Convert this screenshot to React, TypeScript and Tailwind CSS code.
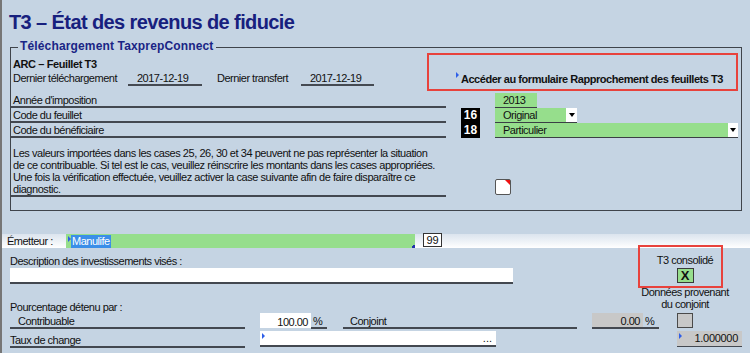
const BG = "bg-[#c5d4e3]";

function Marker() {
  return (
    <span className="absolute left-[2px] top-[2px] w-0 h-0 border-y-[3px] border-y-transparent border-l-[3px] border-l-[#2f5fe8]" />
  );
}

function Dropdown({ w }: { w: string }) {
  return (
    <div className={`${w} h-[15px] bg-white border-b border-[#3b3f45] flex items-center justify-center`}>
      <span className="w-0 h-0 border-x-[3px] border-x-transparent border-t-[4px] border-t-black" />
    </div>
  );
}

function Black({ n }: { n: string }) {
  return (
    <div className="w-[19px] h-[15px] bg-black text-white font-bold text-[12px] leading-[15px] text-center tracking-normal">
      {n}
    </div>
  );
}

export default function App() {
  return (
    <div
      className={`w-[750px] h-[353px] overflow-hidden ${BG} border-l-2 border-[#767676] text-[11px] tracking-[-0.5px] text-[#111] font-['Liberation_Sans',Arial,sans-serif]`}
    >
      <h1 className="pt-[8px] pl-[7px] text-[20px] leading-[28px] font-bold tracking-[-0.6px] text-[#17207e]">
        T3 – État des revenus de fiducie
      </h1>

      {/* Fieldset */}
      <div className="relative mt-[11px] ml-[8px] w-[732px] border border-[#3f444b] pb-[13px]">
        <div
          className={`absolute left-[7px] top-[-9px] px-[2px] ${BG} text-[12px] leading-[14px] font-bold tracking-[0.15px] text-[#1a2585]`}
        >
          Téléchargement TaxprepConnect
        </div>

        {/* top section */}
        <div className="flex justify-between h-[43px]">
          <div className="pt-[9px]">
            <div className="pl-[2px] font-bold leading-[14px] tracking-[-0.4px]">ARC – Feuillet T3</div>
            <div className="flex items-end">
              <div className="w-[117px] pl-[2px] leading-[15px]">Dernier téléchargement</div>
              <div className="w-[74px] h-[15px] pl-[9px] leading-[15px] border-b-2 border-[#454a52]">2017-12-19</div>
              <div className="w-[99px] pl-[15px] leading-[15px]">Dernier transfert</div>
              <div className="w-[73px] h-[15px] pl-[9px] leading-[15px] border-b-2 border-[#454a52]">2017-12-19</div>
            </div>
          </div>
          <div className="mt-[5px] mr-[3px] w-[311px] h-[38px] border-2 border-[#e8423c] flex items-end justify-end pr-[13px] pb-[4px]">
            <div className="relative font-bold leading-[12px] tracking-[-0.45px]">
              <span className="absolute left-[-5px] top-[-1px] w-0 h-0 border-y-[3px] border-y-transparent border-l-[3px] border-l-[#2f5fe8]" />
              Accéder au formulaire Rapprochement des feuillets T3
            </div>
          </div>
        </div>

        {/* rows */}
        <div className="mt-[2px] flex flex-col">
          <div className="flex h-[15px]">
            <div className="w-[435px] h-[15px] border-b-2 border-[#434850] pl-[2px] leading-[15px]">Année d'imposition</div>
            <div className="ml-[15px] w-[19px]" />
            <div className="ml-[15px] w-[42px] h-[15px] bg-[#96de8c] border-b border-[#3b3f45] pl-[8px] leading-[15px]">2013</div>
          </div>
          <div className="flex h-[15px]">
            <div className="w-[435px] h-[15px] border-b-2 border-[#434850] pl-[2px] leading-[15px]">Code du feuillet</div>
            <div className="ml-[15px]"><Black n="16" /></div>
            <div className="ml-[15px] w-[71px] h-[15px] bg-[#96de8c] border-b border-[#3b3f45] pl-[8px] leading-[15px]">Original</div>
            <Dropdown w="w-[11px]" />
          </div>
          <div className="flex h-[15px]">
            <div className="w-[435px] h-[15px] border-b-2 border-[#434850] pl-[2px] leading-[15px]">Code du bénéficiaire</div>
            <div className="ml-[15px]"><Black n="18" /></div>
            <div className="ml-[15px] w-[233px] h-[15px] bg-[#96de8c] border-b border-[#3b3f45] pl-[8px] leading-[15px]">Particulier</div>
            <Dropdown w="w-[10px]" />
          </div>
        </div>

        {/* paragraph */}
        <div className="mt-[9px] flex">
          <div className="w-[435px] border-b-2 border-[#434850] pl-[2px] leading-[12px] whitespace-nowrap tracking-[-0.45px]">
            Les valeurs importées dans les cases 25, 26, 30 et 34 peuvent ne pas représenter la situation
            <br />
            de ce contribuable. Si tel est le cas, veuillez réinscrire les montants dans les cases appropriées.
            <br />
            Une fois la vérification effectuée, veuillez activer la case suivante afin de faire disparaître ce
            <br />
            diagnostic.
          </div>
          <div className="ml-[49px] self-end mb-[2px] relative w-[16px] h-[16px] bg-white border border-[#555] rounded-[2px]">
            <span className="absolute right-0 top-0 w-0 h-0 border-t-[5px] border-t-[#e11] border-l-[5px] border-l-transparent" />
          </div>
        </div>
      </div>

      {/* Emetteur band */}
      <div className="mt-[23px] h-[14px] flex bg-gradient-to-b from-[#dbe4ee] to-white">
        <div className="w-[64px] pl-[5px] leading-[14px]">Émetteur :</div>
        <div className="relative w-[349px] h-[14px] bg-[#96de8c]">
          <Marker />
          <span className="absolute left-[5px] top-[1px] h-[13px] px-[1px] bg-[#3a8ee8] text-white leading-[13px]">Manulife</span>
          <span className="absolute right-0 bottom-0 w-[3px] h-[3px] border-r-2 border-b-2 border-[#2233aa]" />
        </div>
        <div className="ml-[8px] -mt-[1px] w-[19px] h-[14px] bg-white border border-[#333] text-center leading-[12px] tracking-normal">
          99
        </div>
      </div>

      {/* lower */}
      <div className="flex">
        <div className="w-[636px] pl-[8px]">
          <div className="mt-[7px] leading-[12px]">Description des investissements visés :</div>
          <div className="mt-[1px] w-[503px] h-[16px] bg-white border-b-2 border-[#434850]" />
          <div className="mt-[17px] leading-[12px]">Pourcentage détenu par :</div>
        </div>
        <div className="w-[103px] -mt-[3px] flex flex-col">
          <div className="w-[85px] h-[43px] border-2 border-[#e8423c] flex flex-col items-center pl-[9px] pt-[7px]">
            <div className="leading-[12px] whitespace-nowrap">T3 consolidé</div>
            <div className="mt-[2px] w-[17px] h-[15px] bg-[#96de8c] border border-[#3a3a3a] text-center font-bold text-[13px] leading-[13px] tracking-normal">
              X
            </div>
          </div>
          <div className="-mt-[2px] w-[94px] text-center leading-[12px] whitespace-nowrap">
            Données provenant
            <br />
            du conjoint
          </div>
        </div>
      </div>

      {/* Contribuable row */}
      <div className="flex pl-[8px] items-start">
        <div className="w-[235px] h-[16px] border-b-2 border-[#434850] pl-[8px] pt-[1px] leading-[15px]">Contribuable</div>
        <div className="ml-[15px] w-[51px] h-[15px] bg-white text-right pr-[3px] pt-[2px] leading-[14px]">100.00</div>
        <div className="w-[16px] h-[16px] border-b-2 border-[#434850] pl-[2px] pt-[1px] leading-[14px]">%</div>
        <div className="ml-[16px] w-[234px] h-[16px] border-b-2 border-[#434850] pl-[7px] pt-[1px] leading-[15px]">Conjoint</div>
        <div className="ml-[15px] flex h-[16px] border-b-2 border-[#434850]">
          <div className="w-[51px] h-[14px] bg-[#c8c8c8] text-right pr-[3px] pt-[1px] leading-[14px]">0.00</div>
          <div className="w-[16px] pl-[2px] pt-[1px] leading-[14px]">%</div>
        </div>
        <div className="ml-[18px] w-[16px] h-[15px] bg-[#c8c8c8] border border-[#4a4a4a]" />
      </div>

      {/* Taux row */}
      <div className="mt-[2px] flex pl-[8px] items-start">
        <div className="w-[235px] h-[17px] border-b-2 border-[#434850] pt-[2px] leading-[15px]">Taux de change</div>
        <div className="relative ml-[15px] w-[236px] h-[16px] bg-white border-b-2 border-[#434850]">
          <Marker />
          <span className="absolute right-[4px] top-0 leading-[14px] tracking-normal">...</span>
        </div>
        <div className="relative ml-[181px] w-[65px] h-[16px] bg-[#c8c8c8] border-b border-[#434850] text-right pr-[4px] leading-[15px] tracking-[-0.3px]">
          <Marker />
          1.000000
        </div>
      </div>
    </div>
  );
}
